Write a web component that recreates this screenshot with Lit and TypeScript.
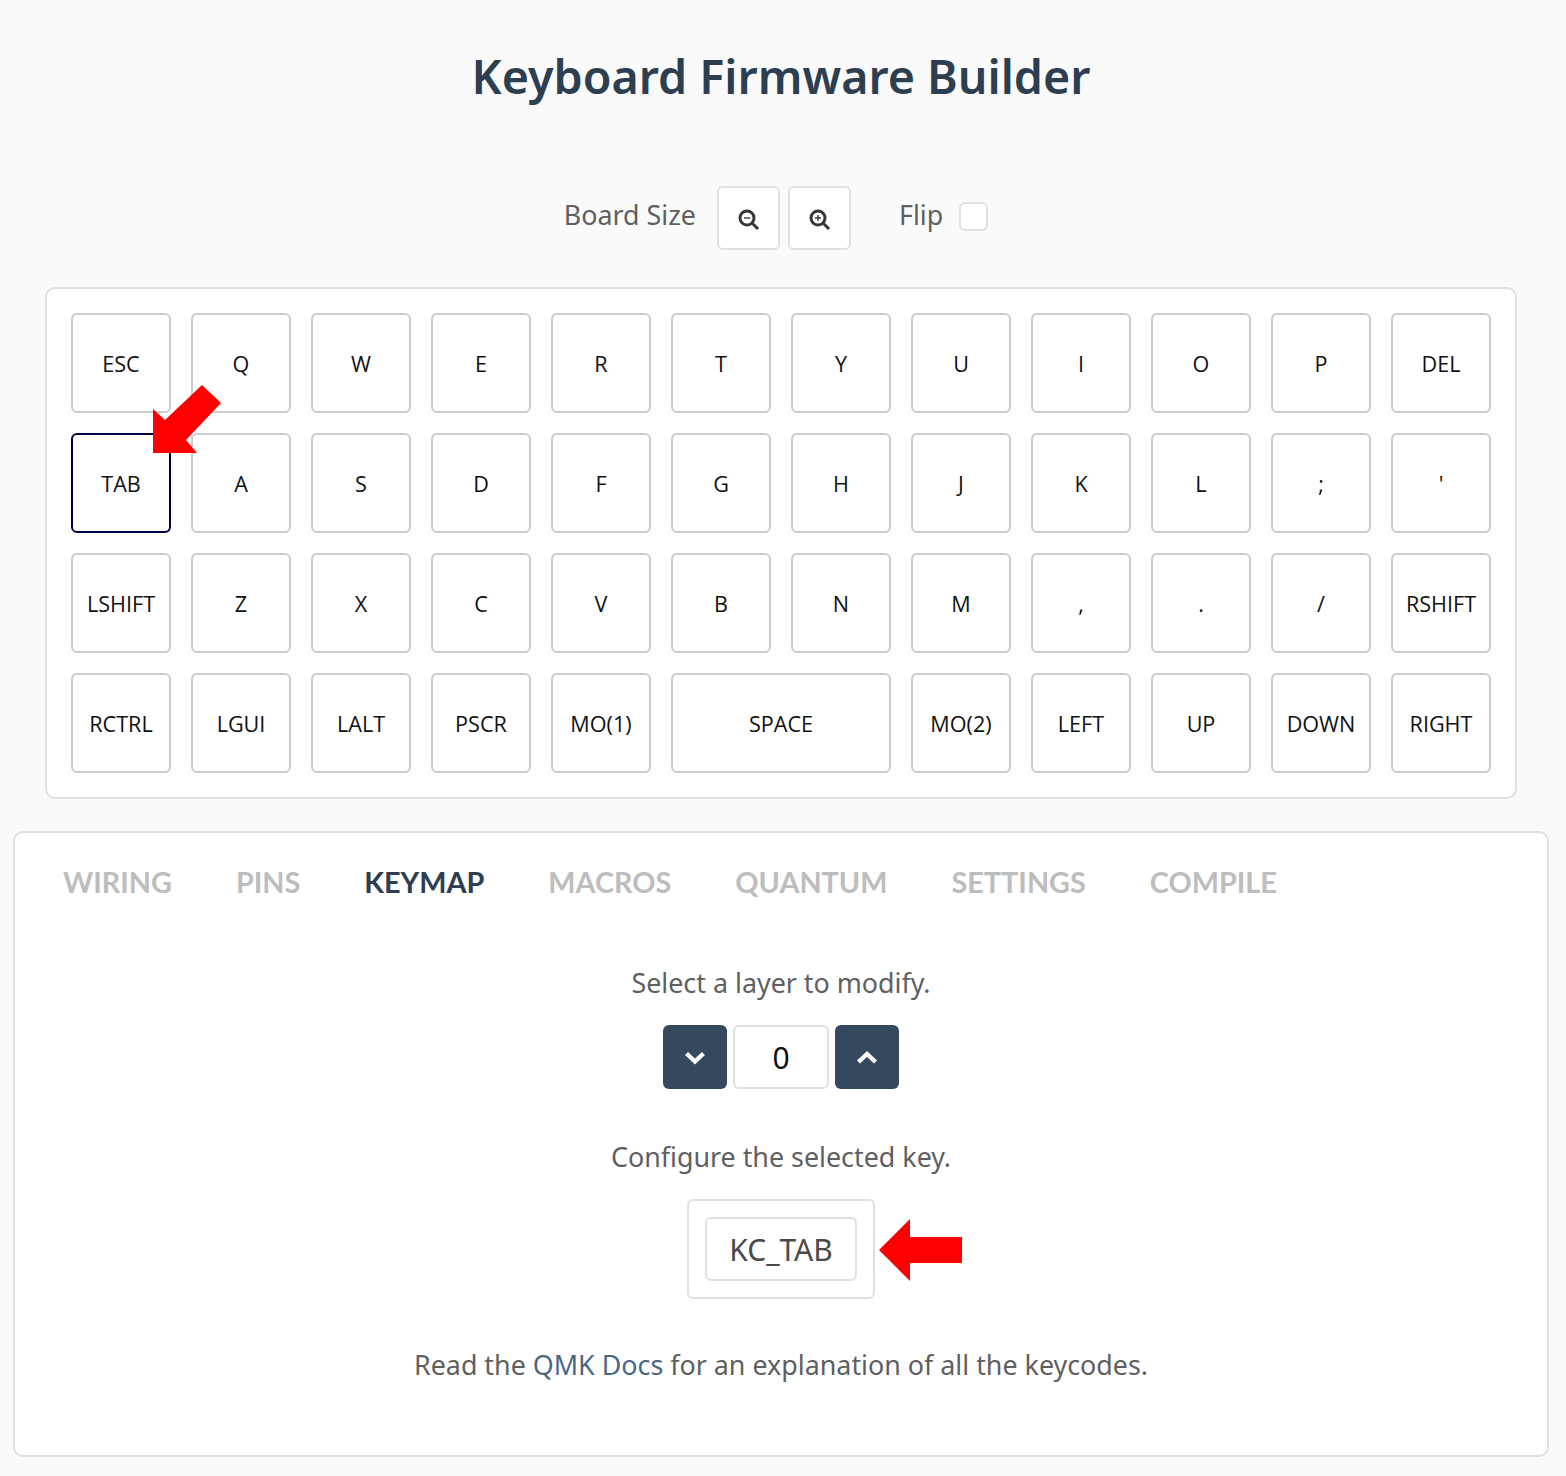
import { LitElement, html, css, svg } from 'lit';
import { customElement } from 'lit/decorators.js';

const ROWS: string[][] = [
  ['ESC', 'Q', 'W', 'E', 'R', 'T', 'Y', 'U', 'I', 'O', 'P', 'DEL'],
  ['TAB', 'A', 'S', 'D', 'F', 'G', 'H', 'J', 'K', 'L', ';', "'"],
  ['LSHIFT', 'Z', 'X', 'C', 'V', 'B', 'N', 'M', ',', '.', '/', 'RSHIFT'],
  ['RCTRL', 'LGUI', 'LALT', 'PSCR', 'MO(1)', 'SPACE', 'MO(2)', 'LEFT', 'UP', 'DOWN', 'RIGHT'],
];

const TABS = ['WIRING', 'PINS', 'KEYMAP', 'MACROS', 'QUANTUM', 'SETTINGS', 'COMPILE'];

const zoomIcon = (plus: boolean) => html`
  <svg class="glass" width="22" height="22" viewBox="0 0 22 22" fill="none" stroke="#363636">
    <circle cx="9" cy="9" r="7" stroke-width="3"></circle>
    <path d="M14 14l6 6" stroke-width="3"></path>
    ${svg`<path d="${plus ? 'M6 9h6M9 6v6' : 'M6 9h6'}" stroke-width="1.4"></path>`}
  </svg>
`;

@customElement('app-root')
export class AppRoot extends LitElement {
  static styles = css`
    :host {
      display: block;
      position: relative;
      width: 1566px;
      height: 1476px;
      background: #fafafa;
      color: #5f5f5f;
      font-family: 'Noto Sans', 'Open Sans', sans-serif;
      font-size: 26.85px;
      overflow: hidden;
    }

    h1 {
      margin: 0;
      padding: 44px 4px 0 0;
      height: 186px;
      box-sizing: border-box;
      text-align: center;
      color: #2c3e50;
      font-size: 46.6px;
      font-weight: 600;
      line-height: 64px;
    }

    /* Zoom and flip controls */
    .controls {
      display: flex;
      justify-content: center;
      align-items: center;
      height: 64px;
      margin-right: 14px;
    }
    .controls .label {
      line-height: 60px;
      margin-top: -6px;
    }
    .zoom {
      display: flex;
      align-items: center;
      justify-content: center;
      width: 63px;
      height: 64px;
      box-sizing: border-box;
      background: #fff;
      border: 2px solid #e0e0e0;
      border-radius: 6px;
    }
    .glass {
      margin: 3px 0 0 1px;
    }
    .zoom.first {
      margin-left: 21px;
      margin-right: 8px;
    }
    .flip {
      margin-left: 48px;
    }
    .check {
      width: 29px;
      height: 29px;
      box-sizing: border-box;
      margin-left: 16px;
      margin-top: -4px;
      background: #fff;
      border: 2px solid #e0e0e0;
      border-radius: 6px;
    }

    /* Keyboard */
    .board {
      margin: 37px 0 0 45px;
      width: 1472px;
      height: 512px;
      box-sizing: border-box;
      padding: 24px;
      display: flex;
      flex-direction: column;
      gap: 20px;
      background: #fff;
      border: 2px solid #e0e0e0;
      border-radius: 10px;
    }
    .row {
      display: flex;
      gap: 20px;
    }
    .key {
      flex: 0 0 100px;
      height: 100px;
      box-sizing: border-box;
      display: flex;
      align-items: center;
      justify-content: center;
      border: 2px solid #cccccc;
      border-radius: 6px;
      background: #fff;
      color: #111;
      font-family: 'Open Sans', 'Noto Sans', sans-serif;
      font-size: 21.6px;
    }
    .key.wide {
      flex-basis: 220px;
    }
    .key.selected {
      border-color: #00004d;
    }

    /* Bottom panel */
    .panel {
      margin: 32px 0 0 13px;
      width: 1536px;
      height: 626px;
      box-sizing: border-box;
      background: #fff;
      border: 2px solid #e0e0e0;
      border-radius: 10px;
      display: flex;
      flex-direction: column;
      align-items: center;
    }
    .tabs {
      align-self: stretch;
      display: flex;
      gap: 64px;
      padding: 29px 0 0 48px;
      height: 84px;
      box-sizing: border-box;
      font-family: Lato, sans-serif;
      font-size: 28.8px;
      font-weight: 700;
      line-height: 40px;
      color: #bdbdbd;
    }
    .tabs .active {
      color: #2c3e50;
    }
    .hint {
      text-align: center;
      line-height: 36px;
    }
    .hint.layer {
      margin-top: 48px;
    }
    .layers {
      display: flex;
      gap: 6px;
      margin-top: 24px;
    }
    .step {
      display: flex;
      align-items: center;
      justify-content: center;
      width: 64px;
      height: 64px;
      background: #34495e;
      border-radius: 6px;
    }
    .value {
      display: flex;
      align-items: center;
      justify-content: center;
      width: 96px;
      height: 64px;
      box-sizing: border-box;
      background: #fff;
      border: 2px solid #e0e0e0;
      border-radius: 6px;
      color: #111;
      font-size: 30px;
    }
    .hint.configure {
      margin-top: 50px;
    }
    .keycode {
      margin-top: 24px;
      padding: 16px;
      background: #fff;
      border: 2px solid #e0e0e0;
      border-radius: 6px;
    }
    .keycode div {
      display: flex;
      align-items: center;
      justify-content: center;
      width: 152px;
      height: 64px;
      box-sizing: border-box;
      border: 2px solid #e0e0e0;
      border-radius: 6px;
      color: #4a4a4a;
      font-size: 30px;
    }
    .hint.docs {
      margin-top: 48px;
    }
    .hint a {
      color: #4a6785;
      text-decoration: none;
    }

    /* Annotation arrows drawn over the screenshot */
    .arrows {
      position: absolute;
      left: 0;
      top: 0;
      pointer-events: none;
    }
  `;

  render() {
    return html`
      <h1>Keyboard Firmware Builder</h1>
      <div class="controls">
        <span class="label">Board Size</span>
        <div class="zoom first">${zoomIcon(false)}</div>
        <div class="zoom">${zoomIcon(true)}</div>
        <span class="label flip">Flip</span>
        <div class="check"></div>
      </div>
      <div class="board">
        ${ROWS.map(
          (row) => html`
            <div class="row">
              ${row.map(
                (k) => html`<div class="key ${k === 'SPACE' ? 'wide' : ''} ${k === 'TAB' ? 'selected' : ''}">${k}</div>`,
              )}
            </div>
          `,
        )}
      </div>
      <div class="panel">
        <div class="tabs">${TABS.map((t) => html`<span class=${t === 'KEYMAP' ? 'active' : ''}>${t}</span>`)}</div>
        <div class="hint layer">Select a layer to modify.</div>
        <div class="layers">
          <div class="step">
            <svg width="24" height="16" viewBox="0 0 24 16" fill="none" stroke="#fff" stroke-width="4.4">
              <path d="M3.5 4.5L12 12.5L20.5 4.5"></path>
            </svg>
          </div>
          <div class="value">0</div>
          <div class="step">
            <svg width="24" height="16" viewBox="0 0 24 16" fill="none" stroke="#fff" stroke-width="4.4">
              <path d="M3.5 13L12 5L20.5 13"></path>
            </svg>
          </div>
        </div>
        <div class="hint configure">Configure the selected key.</div>
        <div class="keycode"><div>KC_TAB</div></div>
        <div class="hint docs">Read the <a href="#">QMK Docs</a> for an explanation of all the keycodes.</div>
      </div>
      <svg class="arrows" width="1566" height="1476" fill="#ff0000">
        <polygon points="153,409 165,420 202,385 221,403 186,440 197,453 153,453"></polygon>
        <polygon points="879,1250 910,1219 910,1237 962,1237 962,1263 910,1263 910,1281"></polygon>
      </svg>
    `;
  }
}
